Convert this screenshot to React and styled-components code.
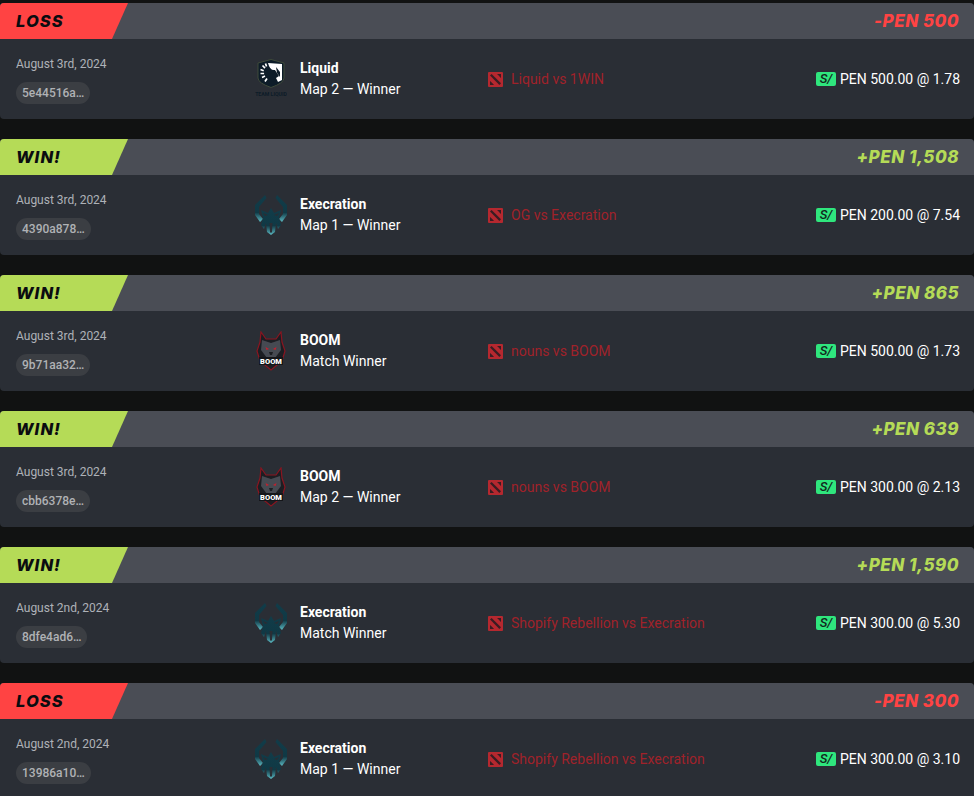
import React from "react";
import styled, { createGlobalStyle } from "styled-components";

const GlobalStyle = createGlobalStyle`
  html, body {
    margin: 0;
    height: 796px;
    overflow: hidden;
    background: #111212;
    font-family: Roboto, "Liberation Sans", sans-serif;
  }
`;

const List = styled.div`
  display: flex;
  flex-direction: column;
  gap: 20px;
  padding-top: 3px;
`;

const Card = styled.div`
  flex: none;
  border-radius: 4px;
  overflow: hidden;
  background: #2a2e35;
`;

const Header = styled.div`
  display: flex;
  justify-content: space-between;
  align-items: center;
  height: 36px;
  padding-right: 15px;
  background: #4a4d55;
`;

const Result = styled.div`
  display: flex;
  align-items: center;
  width: 128px;
  height: 100%;
  box-sizing: border-box;
  padding-left: 16px;
  clip-path: polygon(0 0, 100% 0, 112px 100%, 0 100%);
  background: ${(p) => (p.$win ? "#b5db57" : "#ff4343")};
  color: #0b0c10;
  font-family: Inter, Roboto, sans-serif;
  font-size: 16.5px;
  font-weight: 800;
  font-style: italic;
  letter-spacing: 1.1px;
`;

const Amount = styled.div`
  color: ${(p) => (p.$win ? "#b5db57" : "#ff4343")};
  font-family: Inter, Roboto, sans-serif;
  font-size: 17px;
  font-weight: 800;
  font-style: italic;
  letter-spacing: 0.5px;
`;

const Body = styled.div`
  display: grid;
  grid-template-columns: 234px 238px 1fr auto;
  align-items: center;
  height: 80px;
  padding: 0 14px 0 16px;
`;

const Meta = styled.div`
  display: flex;
  flex-direction: column;
  align-items: flex-start;
  gap: 11px;
  padding-top: 2px;
`;

const DateText = styled.div`
  color: #aeb2b8;
  font-size: 12px;
  line-height: 14px;
`;

const Hash = styled.div`
  padding: 0 6px;
  height: 22px;
  border-radius: 11px;
  background: #3b3e43;
  color: #b0b2b5;
  font-size: 12px;
  font-weight: 500;
  line-height: 22px;
`;

const Pick = styled.div`
  display: flex;
  align-items: center;
  gap: 8px;
`;

const LogoBox = styled.div`
  width: 42px;
  height: 46px;
  display: flex;
  align-items: center;
  justify-content: center;
`;

const PickText = styled.div`
  display: flex;
  flex-direction: column;
  gap: 3px;
  padding-bottom: 2px;
  color: #fff;
  font-size: 14px;
  line-height: 18px;
`;

const Team = styled.div`
  font-weight: 700;
`;

const Event = styled.div`
  display: flex;
  align-items: center;
  gap: 8px;
  color: #a0222a;
  font-size: 14px;
`;

const Stake = styled.div`
  display: flex;
  align-items: center;
  gap: 4px;
  color: #fff;
  font-size: 14px;
`;

const Currency = styled.span`
  width: 20px;
  height: 14px;
  border-radius: 2px;
  background: #2fe67d;
  color: #12251c;
  font-size: 13px;
  font-style: italic;
  font-weight: 500;
  line-height: 14px;
  text-align: center;
`;

const DotaIcon = () => (
  <svg width="15" height="15" viewBox="0 0 15 15">
    <rect width="15" height="15" rx="1" fill="#b5282f" />
    <path d="M2 3.6 L3.6 2 L13 11.2 L11.4 13Z" fill="#3a1c22" />
    <path d="M9 2h4v4l-1.3-1.2L10.4 3.2ZM2 9l1.4 1.2 1.6 1.6 1 1.2H2Z" fill="#3a1c22" />
  </svg>
);

const LiquidLogo = () => (
  <svg width="32" height="40" viewBox="0 0 32 40">
    <path d="M3 4 L16 0.5 L29 4 V19 Q29 24 16 28.5 Q3 24 3 19Z" fill="#0d1c28" stroke="#3f4a3a" strokeWidth="1" />
    <path d="M13 4 L27 5 V21 L23 23 L21 19 L24 17 L20 11 Q15 12 13 4Z" fill="#fff" />
    <path d="M21 8 L25 13 V18 L22 14Z" fill="#0d1c28" />
    <path d="M10.5 4.5l1 3M7.5 6.5l2.5 2.6M5.5 10.5l3.2 1.2M5.5 14.5h3.6M7 18.5l3-1.4M10 22.5l2-3" stroke="#fff" strokeWidth="1.7" />
    <text x="16" y="37" textAnchor="middle" fill="#0d1c28" fontSize="5.2" fontWeight="700">TEAM LIQUID</text>
  </svg>
);

const ExecrationLogo = () => (
  <svg width="32" height="40" viewBox="0 0 32 40">
    <defs>
      <linearGradient id="exec" x1="0" y1="0" x2="0" y2="1">
        <stop offset="0" stopColor="#113c49" />
        <stop offset="0.65" stopColor="#103945" />
        <stop offset="1" stopColor="#5cbac3" />
      </linearGradient>
    </defs>
    <path d="M10 0 L11.5 3 L4 12 V19 L8 24 L5 27 L0 20 V10Z" fill="url(#exec)" />
    <path d="M22 0 L20.5 3 L28 12 V19 L24 24 L27 27 L32 20 V10Z" fill="url(#exec)" />
    <path d="M6 15 L13 18 L16 13 L19 18 L26 15 L24 23 L26 30 L23 34 L21 28 L20 37 L16 40 L12 37 L11 28 L9 34 L6 30 L8 23Z" fill="url(#exec)" />
    <path d="M8 18 L13 20 L10 21Z M24 18 L19 20 L22 21Z" fill="#2a2e35" />
    <path d="M14.5 28 L15 37 L16 38 L17 37 L17.5 28Z" fill="#2a2e35" />
  </svg>
);

const BoomLogo = () => (
  <svg width="30" height="40" viewBox="0 0 30 40">
    <path d="M5 1 L10 8 H20 L25 1 L26 11 L29 20 L26 30 L15 39 L4 30 L1 20 L4 11Z" fill="#1c1e23" stroke="#8a1520" strokeWidth="1.2" />
    <path d="M6 9 L15 12 L24 9 L25 19 L19 27 H11 L5 19Z" fill="#464a52" />
    <path d="M9.5 16 L13 18 L10.5 19Z M20.5 16 L17 18 L19.5 19Z" fill="#c7202e" />
    <path d="M13 21 H17 L16 24 H14Z" fill="#1c1e23" />
    <rect x="3" y="26" width="24" height="8" fill="#15161a" />
    <text x="15" y="33" textAnchor="middle" fill="#fff" fontSize="7.5" fontWeight="900">BOOM</text>
  </svg>
);

const logos = { liquid: LiquidLogo, execration: ExecrationLogo, boom: BoomLogo };

const bets = [
  { win: false, amount: "-PEN 500", date: "August 3rd, 2024", hash: "5e44516a…", logo: "liquid", team: "Liquid", market: "Map 2 — Winner", event: "Liquid vs 1WIN", stake: "PEN 500.00 @ 1.78" },
  { win: true, amount: "+PEN 1,508", date: "August 3rd, 2024", hash: "4390a878…", logo: "execration", team: "Execration", market: "Map 1 — Winner", event: "OG vs Execration", stake: "PEN 200.00 @ 7.54" },
  { win: true, amount: "+PEN 865", date: "August 3rd, 2024", hash: "9b71aa32…", logo: "boom", team: "BOOM", market: "Match Winner", event: "nouns vs BOOM", stake: "PEN 500.00 @ 1.73" },
  { win: true, amount: "+PEN 639", date: "August 3rd, 2024", hash: "cbb6378e…", logo: "boom", team: "BOOM", market: "Map 2 — Winner", event: "nouns vs BOOM", stake: "PEN 300.00 @ 2.13" },
  { win: true, amount: "+PEN 1,590", date: "August 2nd, 2024", hash: "8dfe4ad6…", logo: "execration", team: "Execration", market: "Match Winner", event: "Shopify Rebellion vs Execration", stake: "PEN 300.00 @ 5.30" },
  { win: false, amount: "-PEN 300", date: "August 2nd, 2024", hash: "13986a10…", logo: "execration", team: "Execration", market: "Map 1 — Winner", event: "Shopify Rebellion vs Execration", stake: "PEN 300.00 @ 3.10" },
];

const App = () => (
  <>
    <GlobalStyle />
    <List>
      {bets.map((bet) => {
        const Logo = logos[bet.logo];
        return (
          <Card key={bet.hash}>
            <Header>
              <Result $win={bet.win}>{bet.win ? "WIN!" : "LOSS"}</Result>
              <Amount $win={bet.win}>{bet.amount}</Amount>
            </Header>
            <Body>
              <Meta>
                <DateText>{bet.date}</DateText>
                <Hash>{bet.hash}</Hash>
              </Meta>
              <Pick>
                <LogoBox><Logo /></LogoBox>
                <PickText>
                  <Team>{bet.team}</Team>
                  <div>{bet.market}</div>
                </PickText>
              </Pick>
              <Event>
                <DotaIcon />
                {bet.event}
              </Event>
              <Stake>
                <Currency>S/</Currency>
                {bet.stake}
              </Stake>
            </Body>
          </Card>
        );
      })}
    </List>
  </>
);

export default App;
